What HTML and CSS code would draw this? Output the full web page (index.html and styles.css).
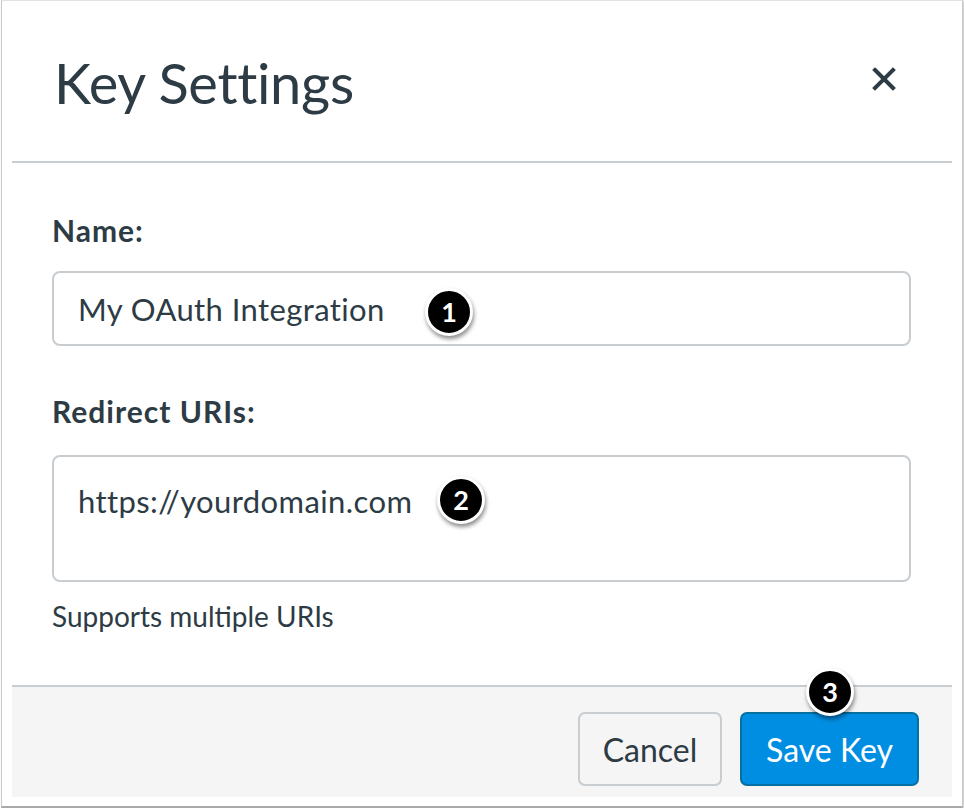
FILE: index.html
```html
<!DOCTYPE html>
<html>
<head>
<meta charset="utf-8">
<link rel="stylesheet" href="styles.css">
</head>
<body>
<div class="window">
  <div class="dialog">
    <div class="header">
      <h1 class="title">Key Settings</h1>
      <button class="close" aria-label="Close">
        <svg width="24" height="24" viewBox="0 0 24 24"><path d="M3 3 L21 21 M21 3 L3 21" stroke="#2d3b45" stroke-width="4" stroke-linecap="square"/></svg>
      </button>
    </div>
    <div class="body">
      <label class="label label-name">Name:</label>
      <div class="field field-name">
        <span class="value">My OAuth Integration</span>
        <span class="badge badge-1">1</span>
      </div>
      <label class="label label-uri">Redirect URIs:</label>
      <div class="field field-uri">
        <span class="value">https://yourdomain.com</span>
        <span class="badge badge-2">2</span>
      </div>
      <div class="hint">Supports multiple URIs</div>
    </div>
    <div class="footer">
      <button class="btn btn-cancel">Cancel</button>
      <button class="btn btn-save">Save Key<span class="badge badge-3">3</span></button>
    </div>
  </div>
</div>
</body>
</html>
```

FILE: styles.css
```css
html, body {
  margin: 0;
  padding: 0;
  background: #ffffff;
}
body {
  font-family: Lato, "Open Sans", sans-serif;
  color: #2d3b45;
}
.window {
  box-sizing: border-box;
  margin-left: 1px;
  width: 962px;
  height: 808px;
  border: 1px solid #c8c8c8;
  border-top-color: #e2e2e2;
  border-bottom: 2px solid #a9a9a9;
  box-shadow: 1px 1px 2px rgba(0,0,0,0.25);
  padding: 0 10px 0 10px;
  background: #fff;
}
.dialog {
  display: flex;
  flex-direction: column;
  height: 796px;
}
.header {
  height: 162px;
  border-bottom: 2px solid #c7cdd1;
  display: flex;
  align-items: flex-start;
  justify-content: space-between;
  padding: 0 56px 0 42px;
  box-sizing: border-box;
}
.title {
  margin: 0;
  margin-top: 48px;
  font-weight: 400;
  font-size: 56px;
  line-height: 68px;
  letter-spacing: -0.3px;
}
.close {
  margin-top: 66px;
  padding: 0;
  border: 0;
  background: none;
  width: 24px;
  height: 24px;
  display: block;
}
.close svg { display: block; }
.body {
  flex: 1;
  padding: 0 41px 0 40px;
  display: flex;
  flex-direction: column;
}
.label {
  font-weight: 700;
  font-size: 30px;
  line-height: 36px;
  letter-spacing: 1px;
}
.label-name { margin-top: 49px; }
.label-uri { margin-top: 47px; }
.field {
  box-sizing: border-box;
  border: 2px solid #c7cdd1;
  border-radius: 8px;
  padding: 0 24px;
  font-size: 31px;
  letter-spacing: 0.4px;
  display: flex;
  align-items: flex-start;
  position: relative;
}
.field-name {
  margin-top: 23px;
  height: 75px;
  padding-top: 18px;
}
.field-uri {
  margin-top: 26px;
  height: 127px;
  padding-top: 26px;
}
.value { line-height: 36px; }
.hint {
  margin-top: 17px;
  font-size: 28px;
  line-height: 34px;
}
.footer {
  height: 112px;
  box-sizing: border-box;
  border-top: 2px solid #c7cdd1;
  background: #f5f5f5;
  display: flex;
  justify-content: flex-end;
  align-items: flex-start;
  padding: 25px 33px 0 0;
  gap: 18px;
}
.btn {
  font-family: Lato, "Open Sans", sans-serif;
  font-size: 32px;
  height: 74px;
  border-radius: 7px;
  box-sizing: border-box;
  position: relative;
  padding: 0;
}
.btn-cancel {
  width: 144px;
  background: #f5f5f5;
  border: 2px solid #c7cdd1;
  color: #2d3b45;
}
.btn-save {
  width: 179px;
  background: #008ee2;
  border: 2px solid #0770a3;
  color: #ffffff;
}
.badge {
  position: absolute;
  box-sizing: border-box;
  width: 48px;
  height: 48px;
  border-radius: 50%;
  background: #000;
  border: 3px solid #fff;
  color: #fff;
  font-family: Lato, "Open Sans", sans-serif;
  font-weight: 700;
  font-size: 27px;
  line-height: 42px;
  letter-spacing: 0;
  text-align: center;
  box-shadow: 1px 3px 4px rgba(0,0,0,0.45);
}
.badge-1 { left: 371px; top: 15px; }
.badge-2 { left: 383px; top: 19px; }
.badge-3 { left: 64px; top: -46px; }
```
